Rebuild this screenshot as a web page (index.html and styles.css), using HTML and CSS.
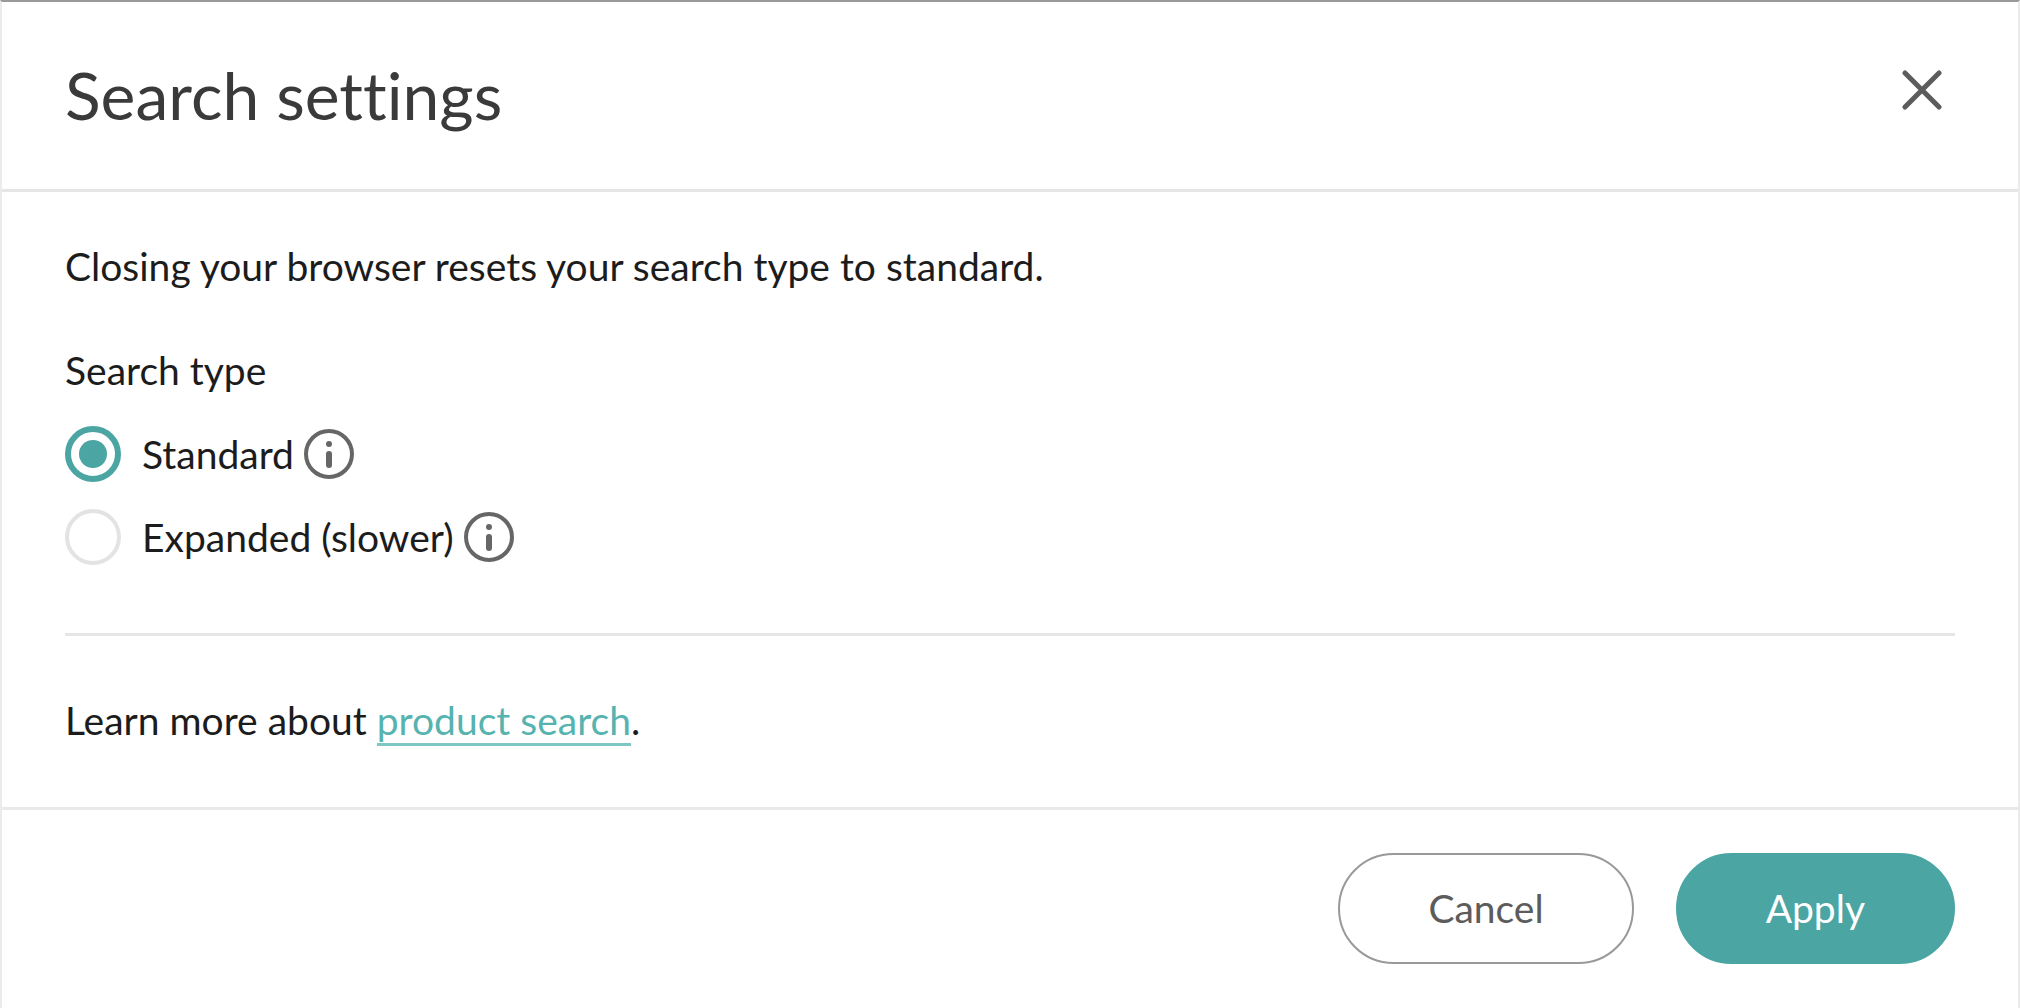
FILE: index.html
```
<!DOCTYPE html>
<html lang="en">
<head>
    <meta charset="UTF-8">
    <meta name="viewport" content="width=device-width, initial-scale=1.0">
    <title>Search settings</title>
    <link rel="stylesheet" href="styles.css">
</head>
<body>
    <form class="dialog" role="dialog" aria-labelledby="dialogTitle">
        <header class="dialog-header">
            <h1 id="dialogTitle">Search settings</h1>
            <button type="button" class="close-button" aria-label="Close">
                <svg viewBox="0 0 40 40" aria-hidden="true">
                    <path d="M3 3 L37 37 M37 3 L3 37"/>
                </svg>
            </button>
        </header>

        <div class="dialog-body">
            <p class="note">Closing your browser resets your search type to standard.</p>

            <fieldset class="search-type">
                <legend>Search type</legend>
                <div class="option">
                    <input type="radio" id="typeStandard" name="searchType" value="standard" checked>
                    <label for="typeStandard">Standard</label>
                    <button type="button" class="info-button" aria-label="About standard search">
                        <svg viewBox="0 0 50 50" aria-hidden="true">
                            <circle class="ring" cx="25" cy="25" r="23"/>
                            <circle class="dot" cx="25" cy="15" r="3"/>
                            <path class="stem" d="M25 25 V36"/>
                        </svg>
                    </button>
                </div>
                <div class="option">
                    <input type="radio" id="typeExpanded" name="searchType" value="expanded">
                    <label for="typeExpanded">Expanded (slower)</label>
                    <button type="button" class="info-button" aria-label="About expanded search">
                        <svg viewBox="0 0 50 50" aria-hidden="true">
                            <circle class="ring" cx="25" cy="25" r="23"/>
                            <circle class="dot" cx="25" cy="15" r="3"/>
                            <path class="stem" d="M25 25 V36"/>
                        </svg>
                    </button>
                </div>
            </fieldset>

            <hr>

            <p class="learn-more">Learn more about <a href="#">product search</a>.</p>
        </div>

        <footer class="dialog-footer">
            <button type="button" class="button cancel">Cancel</button>
            <button type="submit" class="button apply">Apply</button>
        </footer>
    </form>
</body>
</html>
```

FILE: styles.css
```
* {
    box-sizing: border-box;
}

body {
    margin: 0;
    font-family: Lato, sans-serif;
    font-size: 39px;
    line-height: 48px;
    font-variant-ligatures: none;
    color: #1c1c1c;
    background-color: #fff;
}

.dialog {
    min-height: 100vh;
    display: flex;
    flex-direction: column;
    border: 2px solid #ebebeb;
    border-top-color: #999;
    border-bottom: none;
}

.dialog-header {
    display: flex;
    justify-content: space-between;
    align-items: flex-start;
    padding: 53px 63px 54px;
    border-bottom: 3px solid #e6e6e6;
}

.dialog-header h1 {
    margin: 0;
    font-size: 66px;
    font-weight: 400;
    line-height: 80px;
    color: #3a3a3a;
}

button {
    font: inherit;
    cursor: pointer;
}

.close-button {
    margin: 15px 13px 0 0;
    padding: 0;
    border: none;
    background: none;
}

.close-button svg {
    display: block;
    width: 40px;
    height: 40px;
    fill: none;
    stroke: #5c5c5c;
    stroke-width: 5;
    stroke-linecap: round;
}

.dialog-body {
    flex: 1;
    padding: 50px 63px 60px;
}

.dialog-body p {
    margin: 0;
}

.search-type {
    margin: 56px 0 0;
    padding: 0;
    border: none;
}

.search-type legend {
    padding: 0;
    margin-bottom: 32px;
}

.option {
    display: flex;
    align-items: center;
}

.option + .option {
    margin-top: 27px;
}

.option input {
    appearance: none;
    width: 56px;
    height: 56px;
    margin: 0 21px 0 0;
    border: 4px solid #e3e3e3;
    border-radius: 50%;
    cursor: pointer;
}

.option input:checked {
    border: 6px solid #4aa5a3;
    background: #4aa5a3;
    background-clip: content-box;
    padding: 8px;
}

.info-button {
    margin-left: 10px;
    padding: 0;
    border: none;
    background: none;
}

.info-button svg {
    display: block;
    width: 50px;
    height: 50px;
}

.info-button .ring {
    fill: none;
    stroke: #666;
    stroke-width: 4;
}

.info-button .dot {
    fill: #666;
}

.info-button .stem {
    stroke: #666;
    stroke-width: 6;
    stroke-linecap: round;
}

hr {
    height: 3px;
    margin: 68px 0 60px;
    border: none;
    background-color: #e6e6e6;
}

a {
    color: #56b3b0;
    text-decoration: none;
    border-bottom: 3px solid #7cc7c4;
}

.dialog-footer {
    display: flex;
    justify-content: flex-end;
    gap: 42px;
    padding: 43px 63px 44px;
    border-top: 3px solid #e9e9e9;
}

.button {
    padding: 30px 88px;
    border: 2px solid #999;
    border-radius: 56px;
    line-height: 47px;
}

.cancel {
    color: #5c5c5c;
    background-color: #fff;
}

.apply {
    color: #fff;
    border-color: #4aa5a3;
    background-color: #4aa5a3;
}
```
